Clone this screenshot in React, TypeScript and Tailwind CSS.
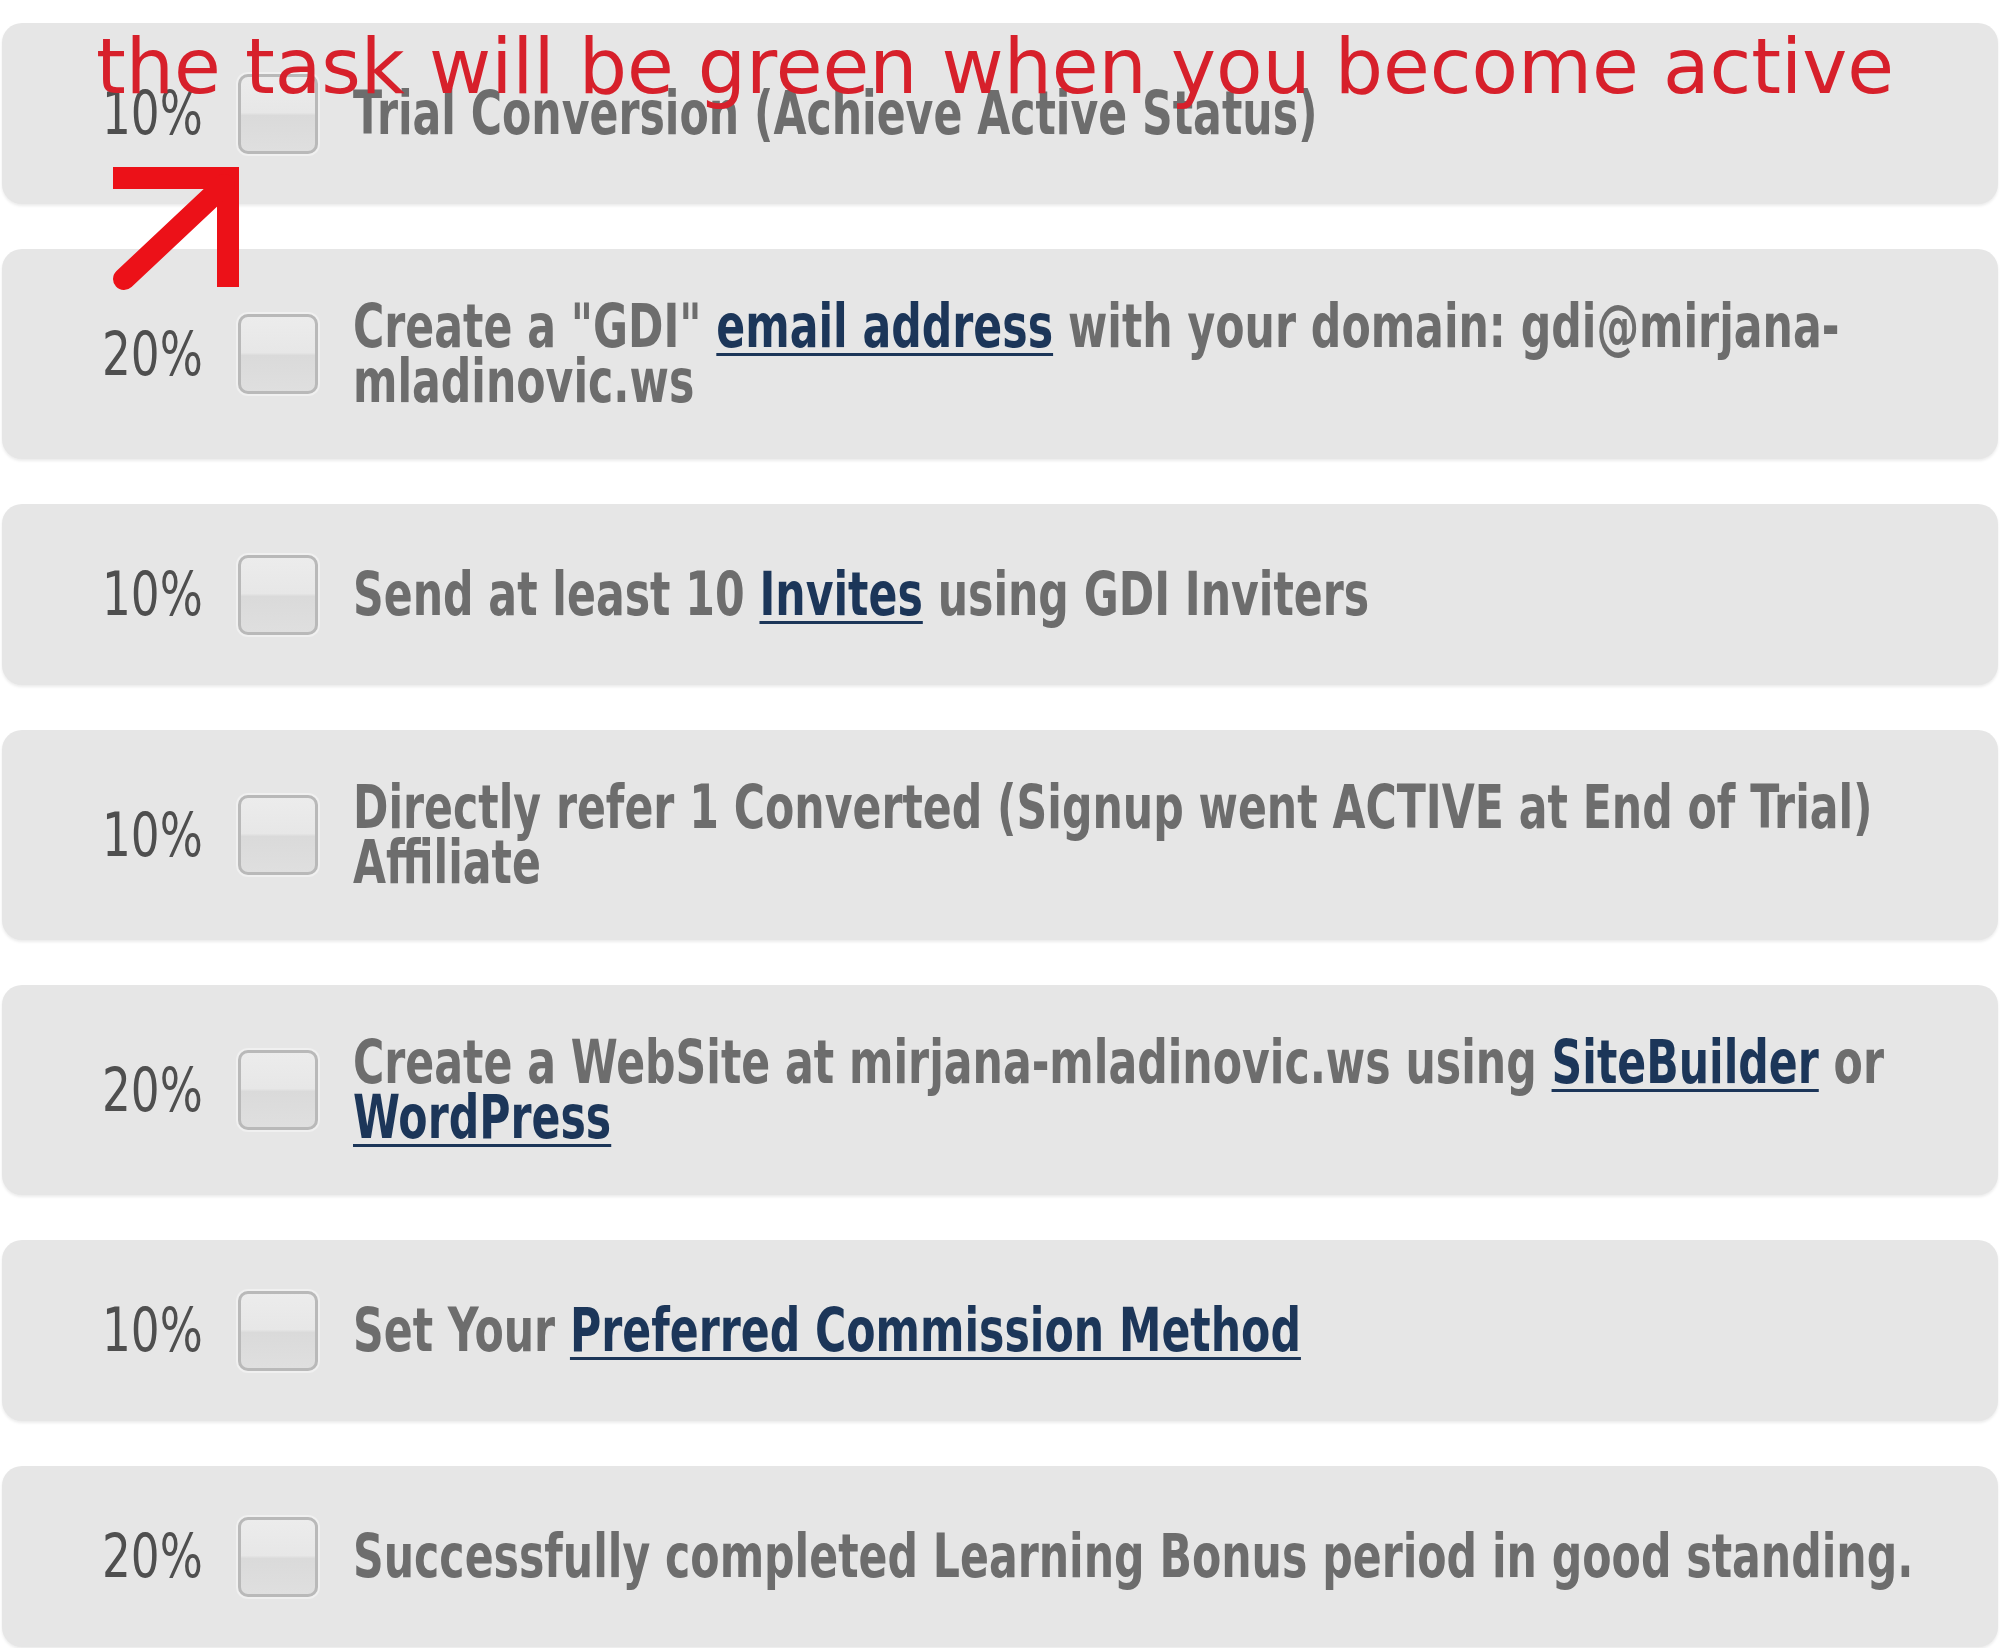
import React from 'react';

type Task = {
    pct: string;
    content: React.ReactNode;
}

const TaskLink = ({ children }: { children: React.ReactNode }) => (
    <a href="#" className="text-[#1c3659] underline decoration-[3px] underline-offset-[6px]">
        {children}
    </a>
);

const tasks: Task[] = [
    { pct: '10%', content: <>Trial Conversion (Achieve Active Status)</> },
    {
        pct: '20%',
        content: (
            <>
                Create a "GDI" <TaskLink>email address</TaskLink> with your domain: gdi@mirjana-
                <br />
                mladinovic.ws
            </>
        ),
    },
    { pct: '10%', content: <>Send at least 10 <TaskLink>Invites</TaskLink> using GDI Inviters</> },
    {
        pct: '10%',
        content: (
            <>
                Directly refer 1 Converted (Signup went ACTIVE at End of Trial)
                <br />
                Affiliate
            </>
        ),
    },
    {
        pct: '20%',
        content: (
            <>
                Create a WebSite at mirjana-mladinovic.ws using <TaskLink>SiteBuilder</TaskLink> or
                <br />
                <TaskLink>WordPress</TaskLink>
            </>
        ),
    },
    { pct: '10%', content: <>Set Your <TaskLink>Preferred Commission Method</TaskLink></> },
    { pct: '20%', content: <>Successfully completed Learning Bonus period in good standing.</> },
];

// the screenshot's font is a narrow tahoma, so the condensed face is squeezed a bit more
const TaskRow = ({ task }: { task: Task }) => (
    <div className="flex items-center min-h-[181px] py-[50px] pl-[100px] bg-[#e6e6e6] rounded-[20px] shadow-[0_2px_3px_rgba(0,0,0,0.08)]">
        <div className="w-[136px] shrink-0">
            <div className="origin-left scale-x-[0.84] whitespace-nowrap text-[60px] leading-[55px] text-[#4f4f4f] [font-family:'DejaVu_Sans_Condensed','DejaVu_Sans',sans-serif]">
                {task.pct}
            </div>
        </div>
        <div className="w-[80px] h-[80px] shrink-0 rounded-[10px] border-[3px] border-[#b9b9b9] bg-[linear-gradient(to_bottom,#ececec_0%,#e7e7e7_48%,#dadada_52%,#dfdfdf_100%)] shadow-[0_0_0_2px_#f0f0f0]" />
        <div className="ml-[35px] shrink-0 origin-left scale-x-[0.79] whitespace-nowrap text-[60px] leading-[55px] font-bold text-[#6d6d6d] [font-family:'DejaVu_Sans_Condensed','DejaVu_Sans',sans-serif]">
            {task.content}
        </div>
    </div>
);

export default function App() {
    return (
        <div className="relative w-[2000px] h-[1648px] overflow-hidden bg-white">
            <div className="flex flex-col gap-[45px] pt-[23px] px-[2px]">
                {tasks.map((task, i) => (
                    <TaskRow key={i} task={task} />
                ))}
            </div>

            {/* annotation drawn over the list */}
            <div className="absolute left-[96px] top-[29px] whitespace-nowrap text-[76px] leading-none text-[#d7202b] [font-family:'DejaVu_Sans',sans-serif]">
                the task will be green when you become active
            </div>
            <svg className="absolute left-0 top-0 pointer-events-none" width="260" height="300" viewBox="0 0 260 300">
                <path d="M113 178 L228 178 L228 287" fill="none" stroke="#ec1118" strokeWidth="22" strokeLinejoin="miter" />
                <path d="M124 279 L224 185" fill="none" stroke="#ec1118" strokeWidth="22" strokeLinecap="round" />
            </svg>
        </div>
    );
}
